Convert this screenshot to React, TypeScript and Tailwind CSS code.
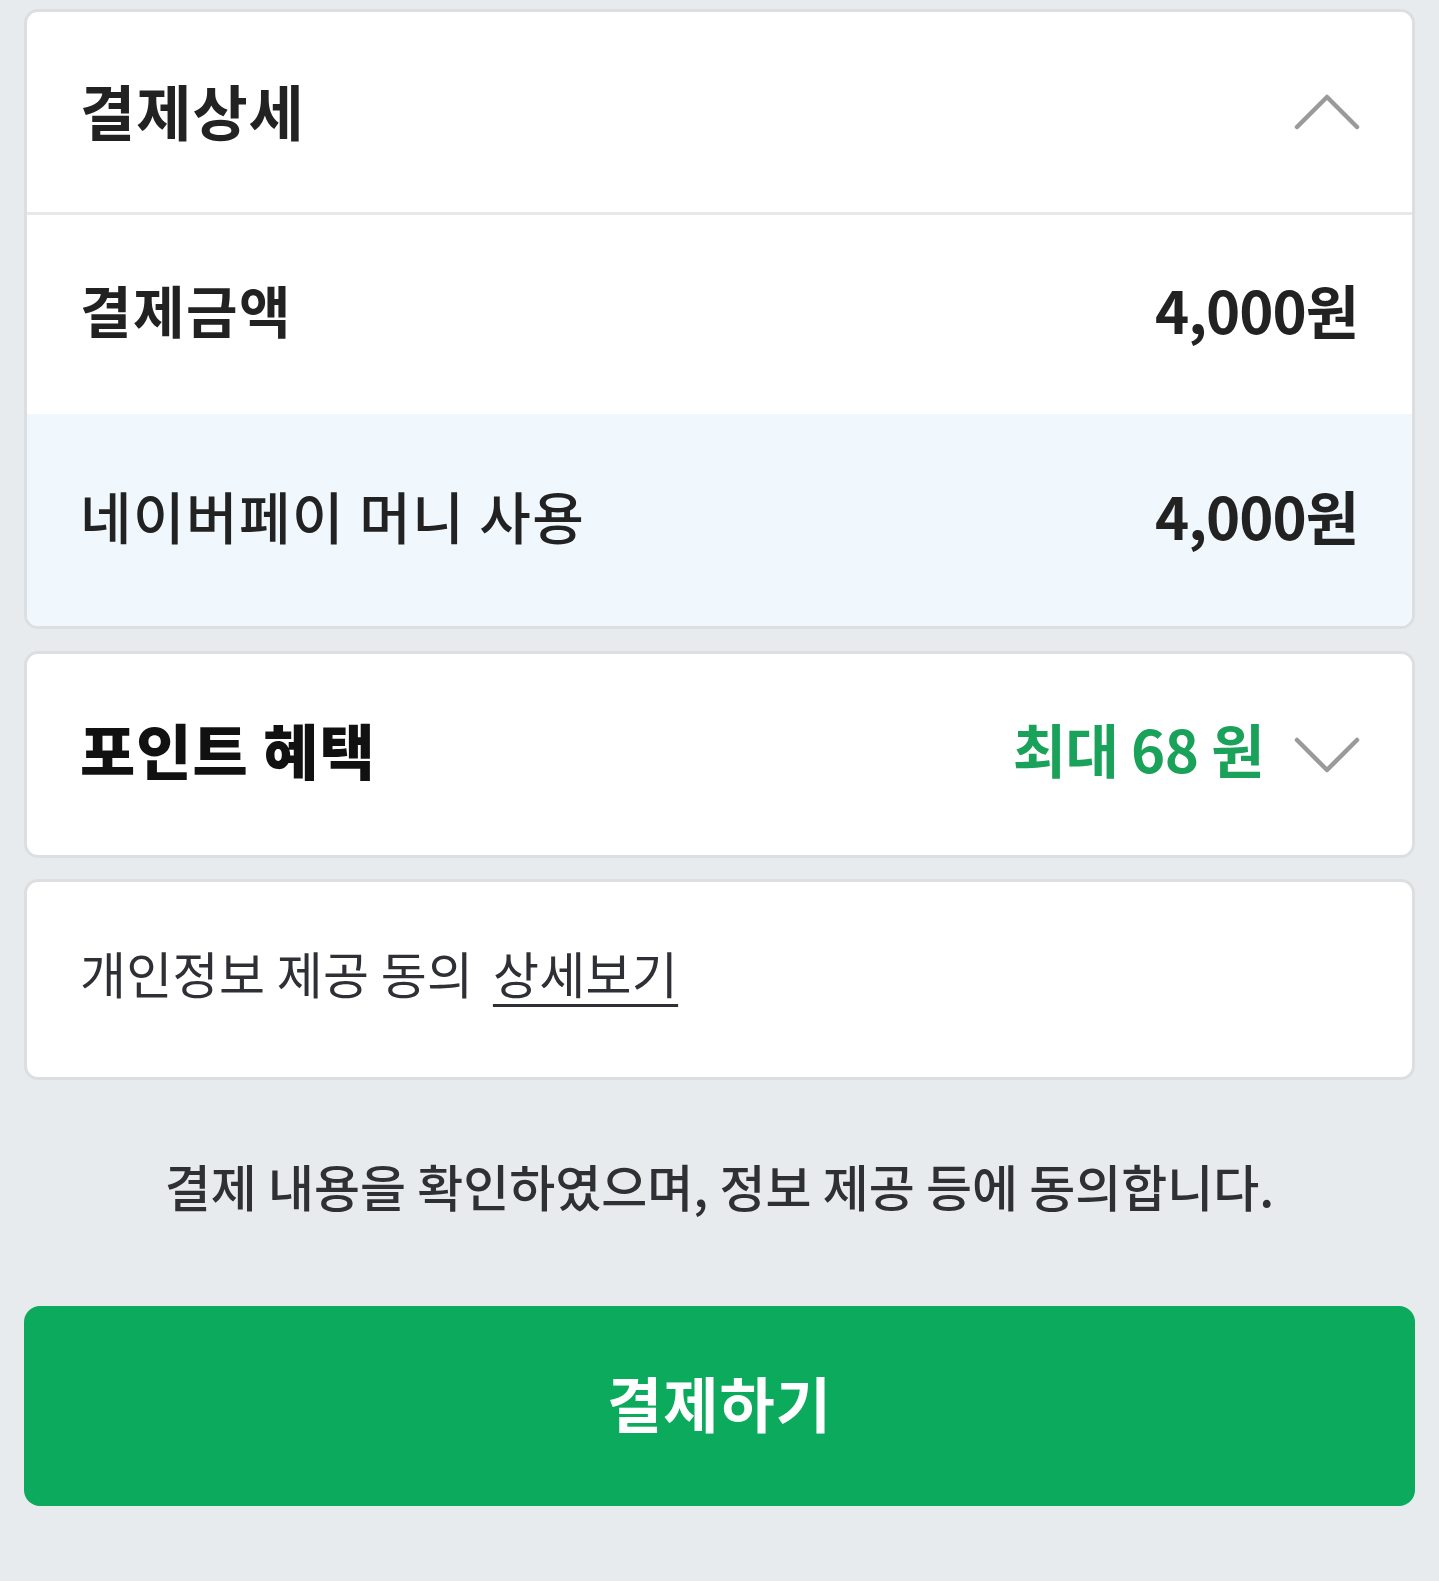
import React from "react";

const font = "font-['Noto_Sans_CJK_KR','Noto_Sans',sans-serif]";

function Chevron({ up }: { up?: boolean }) {
  return (
    <svg width="66" height="38" viewBox="0 0 66 38" fill="none" className="shrink-0">
      <path
        d={up ? "M3 34 L33 4 L63 34" : "M3 4 L33 34 L63 4"}
        stroke="#9a9a9a"
        strokeWidth="4.5"
        strokeLinecap="round"
        strokeLinejoin="round"
      />
    </svg>
  );
}

export default function App() {
  return (
    <div className={`${font} min-h-[1581px] bg-[#e8ebee] px-[24px] pt-[9px] text-[#222222]`}>
      {/* 결제상세 */}
      <div className="overflow-hidden rounded-[14px] border-[3px] border-[#dcdfe2] bg-white">
        <div className="flex h-[203px] items-center justify-between border-b-[3px] border-[#e6e8ea] pl-[53px] pr-[52px]">
          <h2 className="pb-[4px] text-[60px] font-bold tracking-[1px]">결제상세</h2>
          <Chevron up />
        </div>
        <div className="flex h-[199px] items-center justify-between pl-[53px] pr-[54px]">
          <span className="pb-[11px] text-[56px] font-bold tracking-[1.5px]">결제금액</span>
          <span className="pb-[11px] text-[58px] font-bold tracking-[-1px]">4,000원</span>
        </div>
        <div className="flex h-[212px] items-center justify-between bg-[#f0f8fe] pl-[53px] pr-[54px]">
          <span className="pb-[10px] text-[56px] font-medium tracking-[1.5px]">네이버페이 머니 사용</span>
          <span className="pb-[10px] text-[58px] font-bold tracking-[-1px]">4,000원</span>
        </div>
      </div>

      {/* 포인트 혜택 */}
      <div className="mt-[22px] flex h-[207px] items-center justify-between rounded-[14px] border-[3px] border-[#dcdfe2] bg-white pl-[53px] pr-[52px]">
        <span className="pb-[12px] text-[60px] font-black tracking-[1px] text-[#111111]">포인트 혜택</span>
        <div className="flex items-center gap-[30px]">
          <span className="pb-[12px] text-[58px] font-bold tracking-[-0.5px] text-[#1ba25a]">최대 68 원</span>
          <Chevron />
        </div>
      </div>

      {/* 개인정보 */}
      <div className="mt-[21px] flex h-[201px] items-center rounded-[14px] border-[3px] border-[#dcdfe2] bg-white pl-[53px]">
        <span className="pb-[14px] text-[50px] font-normal tracking-[0.3px] text-[#2f3036]">
          개인정보 제공 동의{" "}
          <span className="ml-[8px] underline decoration-[3px] underline-offset-[10px]">상세보기</span>
        </span>
      </div>

      <p className="mt-[68px] text-center text-[50px] font-medium tracking-[0px] text-[#2f3036]">
        결제 내용을 확인하였으며, 정보 제공 등에 동의합니다.
      </p>

      <button className="mt-[83px] flex h-[200px] w-full items-center justify-center rounded-[16px] bg-[#0baa5c] pb-[8px] text-[60px] font-bold tracking-[1px] text-white">
        결제하기
      </button>
    </div>
  );
}
